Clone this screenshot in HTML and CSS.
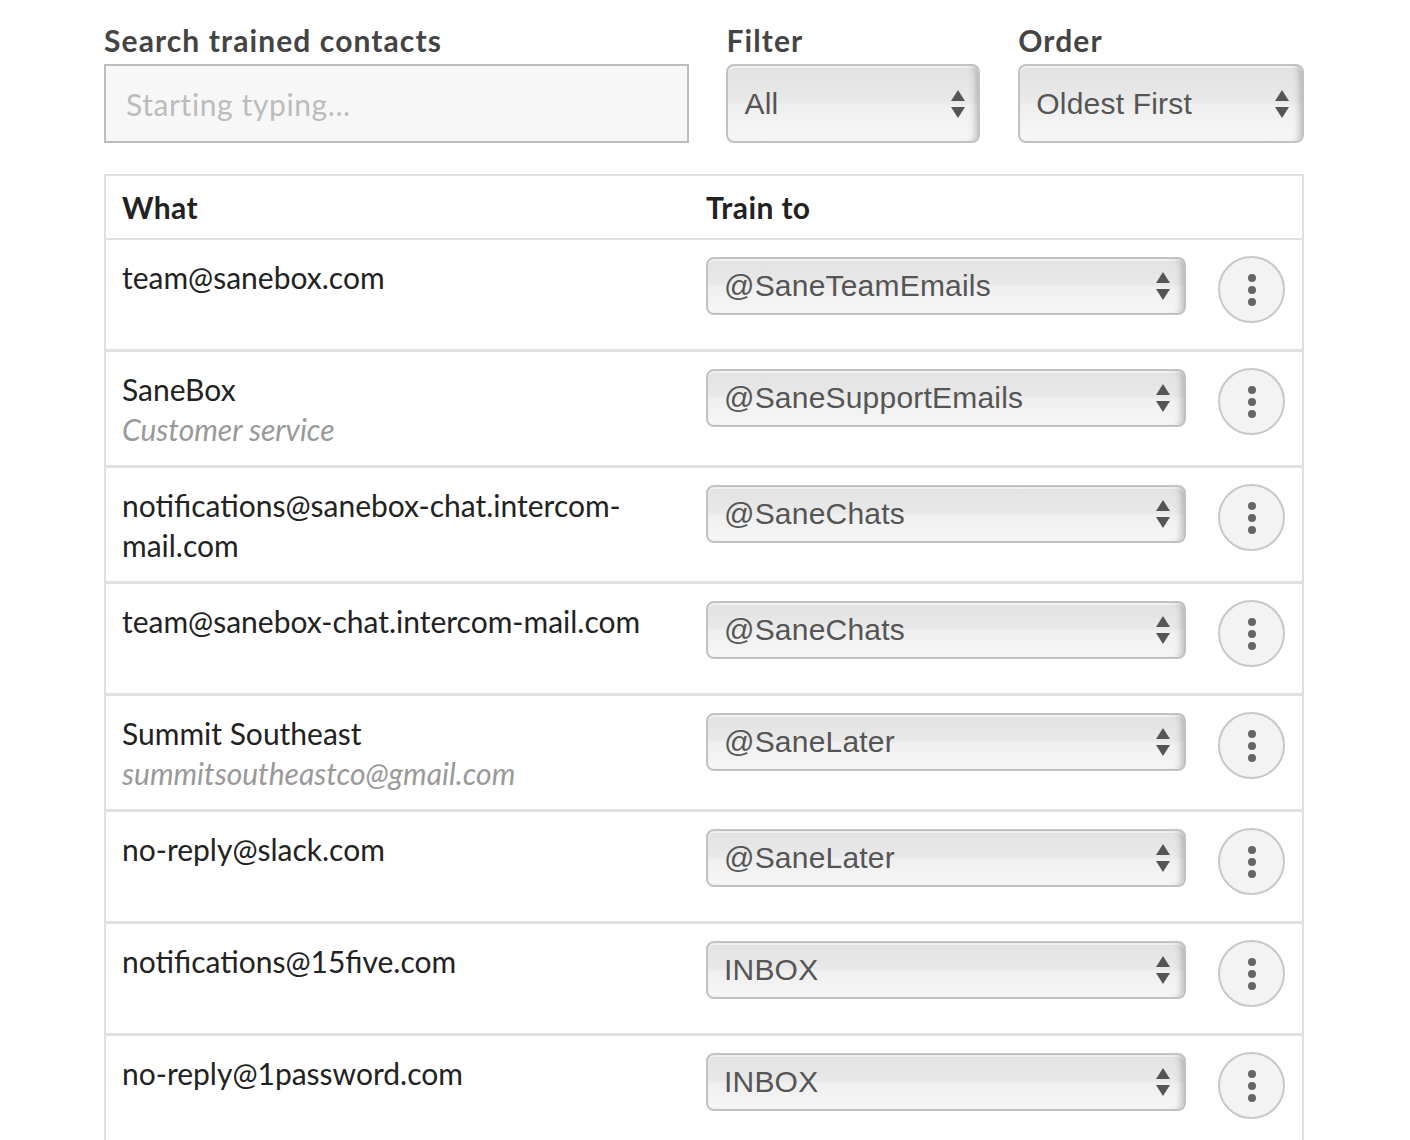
FILE: index.html
```html
<!DOCTYPE html>
<html>
<head>
<meta charset="utf-8">
<link rel="stylesheet" href="styles.css">
</head>
<body>
<div class="page">
  <div class="controls">
    <div class="field field-search">
      <label class="field-label">Search trained contacts</label>
      <input class="search-input" type="text" placeholder="Starting typing...">
    </div>
    <div class="field field-filter">
      <label class="field-label">Filter</label>
      <div class="select select-lg"><span>All</span><svg class="arrows" width="16" height="30" viewBox="0 0 16 30"><path d="M8 1 L15 12 L1 12 Z"/><path d="M1 18 L15 18 L8 29 Z"/></svg></div>
    </div>
    <div class="field field-order">
      <label class="field-label">Order</label>
      <div class="select select-lg"><span>Oldest First</span><svg class="arrows" width="16" height="30" viewBox="0 0 16 30"><path d="M8 1 L15 12 L1 12 Z"/><path d="M1 18 L15 18 L8 29 Z"/></svg></div>
    </div>
  </div>

  <div class="table">
    <div class="row head">
      <div class="cell-what">What</div>
      <div class="cell-train">Train to</div>
    </div>

    <div class="row">
      <div class="cell-what"><div class="name">team@sanebox.com</div></div>
      <div class="select"><span>@SaneTeamEmails</span><svg class="arrows" width="16" height="30" viewBox="0 0 16 30"><path d="M8 1 L15 12 L1 12 Z"/><path d="M1 18 L15 18 L8 29 Z"/></svg></div>
      <button class="kebab"><i></i><i></i><i></i></button>
    </div>

    <div class="row">
      <div class="cell-what"><div class="name">SaneBox</div><div class="sub">Customer service</div></div>
      <div class="select"><span>@SaneSupportEmails</span><svg class="arrows" width="16" height="30" viewBox="0 0 16 30"><path d="M8 1 L15 12 L1 12 Z"/><path d="M1 18 L15 18 L8 29 Z"/></svg></div>
      <button class="kebab"><i></i><i></i><i></i></button>
    </div>

    <div class="row">
      <div class="cell-what"><div class="name">notifications@sanebox-chat.intercom-mail.com</div></div>
      <div class="select"><span>@SaneChats</span><svg class="arrows" width="16" height="30" viewBox="0 0 16 30"><path d="M8 1 L15 12 L1 12 Z"/><path d="M1 18 L15 18 L8 29 Z"/></svg></div>
      <button class="kebab"><i></i><i></i><i></i></button>
    </div>

    <div class="row">
      <div class="cell-what"><div class="name">team@sanebox-chat.intercom-mail.com</div></div>
      <div class="select"><span>@SaneChats</span><svg class="arrows" width="16" height="30" viewBox="0 0 16 30"><path d="M8 1 L15 12 L1 12 Z"/><path d="M1 18 L15 18 L8 29 Z"/></svg></div>
      <button class="kebab"><i></i><i></i><i></i></button>
    </div>

    <div class="row">
      <div class="cell-what"><div class="name">Summit Southeast</div><div class="sub">summitsoutheastco@gmail.com</div></div>
      <div class="select"><span>@SaneLater</span><svg class="arrows" width="16" height="30" viewBox="0 0 16 30"><path d="M8 1 L15 12 L1 12 Z"/><path d="M1 18 L15 18 L8 29 Z"/></svg></div>
      <button class="kebab"><i></i><i></i><i></i></button>
    </div>

    <div class="row">
      <div class="cell-what"><div class="name">no-reply@slack.com</div></div>
      <div class="select"><span>@SaneLater</span><svg class="arrows" width="16" height="30" viewBox="0 0 16 30"><path d="M8 1 L15 12 L1 12 Z"/><path d="M1 18 L15 18 L8 29 Z"/></svg></div>
      <button class="kebab"><i></i><i></i><i></i></button>
    </div>

    <div class="row">
      <div class="cell-what"><div class="name">notifications@15five.com</div></div>
      <div class="select"><span>INBOX</span><svg class="arrows" width="16" height="30" viewBox="0 0 16 30"><path d="M8 1 L15 12 L1 12 Z"/><path d="M1 18 L15 18 L8 29 Z"/></svg></div>
      <button class="kebab"><i></i><i></i><i></i></button>
    </div>

    <div class="row">
      <div class="cell-what"><div class="name">no-reply@1password.com</div></div>
      <div class="select"><span>INBOX</span><svg class="arrows" width="16" height="30" viewBox="0 0 16 30"><path d="M8 1 L15 12 L1 12 Z"/><path d="M1 18 L15 18 L8 29 Z"/></svg></div>
      <button class="kebab"><i></i><i></i><i></i></button>
    </div>
  </div>
</div>
</body>
</html>
```

FILE: styles.css
```css
html, body {
  margin: 0;
  padding: 0;
  background: #ffffff;
}

body {
  font-family: Lato, "Open Sans", sans-serif;
  color: #222;
}

.page {
  padding: 20px 0 0 104px;
  width: 1200px;
}

.controls {
  display: flex;
  gap: 37px;
  align-items: flex-end;
}

.field {
  display: flex;
  flex-direction: column;
}

.field-search { width: 586px; }
.field-filter { width: 254px; }
.field-order { width: 286px; margin-left: 1px; }

.field-label {
  font-weight: 700;
  font-size: 30px;
  letter-spacing: 1.1px;
  line-height: 40px;
  color: #444;
  margin-bottom: 4px;
}

.search-input {
  box-sizing: border-box;
  height: 79px;
  width: 100%;
  border: 2px solid #bdbdbd;
  background: #f7f7f7;
  font-family: Lato, sans-serif;
  font-size: 30px;
  letter-spacing: 0.6px;
  padding: 0 20px;
  outline: none;
  margin: 0;
}

.search-input::placeholder {
  color: #bcbcbc;
}

.select {
  box-sizing: border-box;
  display: flex;
  align-items: center;
  justify-content: space-between;
  height: 58px;
  padding: 0 13px 0 16px;
  border: 2px solid #c2c2c2;
  border-radius: 8px;
  background: linear-gradient(#e2e2e2 0%, #e9e9e9 48%, #efefef 52%, #f6f6f6 100%);
  box-shadow: inset -7px 0 7px -5px rgba(0,0,0,0.25), inset 0 2px 0 rgba(255,255,255,0.6);
  font-family: "Liberation Sans", Arial, sans-serif;
  font-size: 30px;
  letter-spacing: 0.2px;
  color: #555;
}

.select-lg {
  height: 79px;
  padding: 0 12px 0 16px;
}

.arrows {
  fill: #555;
  flex: none;
}

.table {
  margin-top: 31px;
  border: 2px solid #e0e0e0;
  width: 1196px;
}

.row {
  display: grid;
  grid-template-columns: 566px 498px 32px 67px;
  align-items: start;
  padding: 17px 17px 16px 16px;
  border-bottom: 3px solid #e0e0e0;
}

.row .select {
  margin-left: 18px;
  width: 480px;
}

.row .kebab {
  grid-column: 4;
}

.head {
  padding-top: 11px;
  padding-bottom: 11px;
  border-bottom: 2px solid #e0e0e0;
  font-weight: 700;
  font-size: 30px;
  letter-spacing: 0.4px;
  line-height: 40px;
  color: #222;
}

.head .cell-what {
  font-size: 30px;
}

.head .cell-train {
  padding-left: 18px;
}

.cell-what {
  font-size: 30px;
  line-height: 40px;
}

.name {
  color: #222;
}

.sub {
  color: #999;
  font-style: italic;
}

.kebab {
  box-sizing: border-box;
  width: 67px;
  height: 67px;
  margin: -1px 0 10px 0;
  border-radius: 50%;
  border: 2px solid #c8c8c8;
  background: #f3f3f3;
  padding: 0;
  display: flex;
  flex-direction: column;
  align-items: center;
  justify-content: center;
  gap: 4px;
}

.kebab i {
  display: block;
  width: 8px;
  height: 8px;
  border-radius: 50%;
  background: #666;
}
```
